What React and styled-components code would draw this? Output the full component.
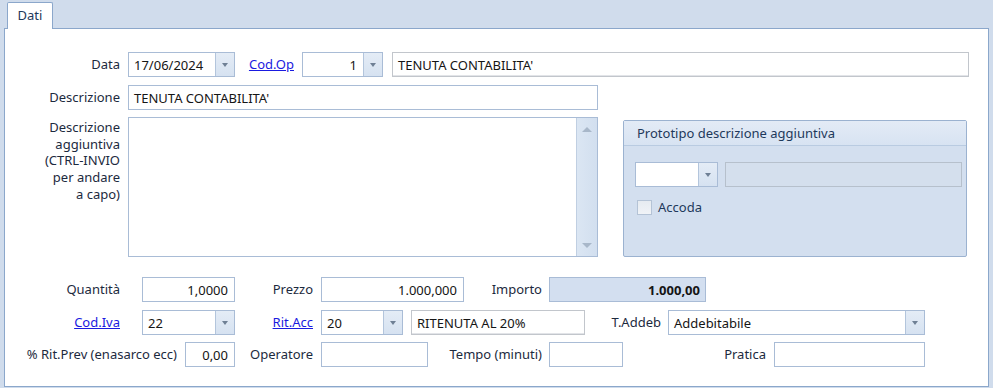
import React from "react";
import styled, { createGlobalStyle, css } from "styled-components";

const GlobalStyle = createGlobalStyle`
  html, body {
    margin: 0;
    padding: 0;
    background: #d3dfee;
  }
  * {
    box-sizing: border-box;
  }
`;

const Frame = styled.div`
  width: 993px;
  height: 388px;
  display: flex;
  flex-direction: column;
  padding: 0 4px 1px 4px;
  background: #d0dcec;
  font-family: "Noto Sans", "Open Sans", sans-serif;
  font-size: 13px;
  color: #1c2a3e;
`;

const TabStrip = styled.div`
  height: 29px;
  display: flex;
  align-items: flex-end;
  padding-left: 3px;
  margin-bottom: -1px;
  position: relative;
  z-index: 1;
`;

const Tab = styled.div`
  width: 46px;
  height: 27px;
  background: #fff;
  border: 1px solid #8ba7cb;
  border-bottom: none;
  border-radius: 2px 2px 0 0;
  display: flex;
  align-items: center;
  justify-content: center;
  color: #1e395b;
  padding-bottom: 2px;
`;

const Panel = styled.div`
  flex: 1;
  background: #fff;
  border: 1px solid #8ba7cb;
  padding-top: 23px;
  display: flex;
  flex-direction: column;
`;

const Row = styled.div`
  display: flex;
  align-items: ${({ $top }) => ($top ? "flex-start" : "center")};
  margin-top: ${({ $mt }) => $mt ?? 8}px;
`;

const Label = styled.div`
  width: ${({ $w }) => $w}px;
  margin-left: ${({ $ml }) => $ml ?? 8}px;
  margin-right: ${({ $mr }) => $mr ?? 8}px;
  text-align: right;
  white-space: nowrap;
  line-height: ${({ $lh }) => $lh ?? 25}px;
  padding-top: ${({ $pt }) => $pt ?? 0}px;
  color: #1c2a3e;
`;

const MultiLabel = styled(Label)`
  line-height: 16.7px;
`;

const LinkText = styled.a`
  color: #1a1ae0;
  text-decoration: underline;
  cursor: pointer;
`;

const boxBase = css`
  height: 25px;
  width: ${({ $w }) => $w}px;
  margin-left: ${({ $ml }) => $ml ?? 0}px;
  border: 1px solid #a9bcd6;
  background: #fff;
  display: flex;
  align-items: stretch;
  color: #151515;
`;

const TextBox = styled.div`
  ${boxBase}
  align-items: center;
  padding: 0 6px 0 5px;
  white-space: nowrap;
  justify-content: ${({ $right }) => ($right ? "flex-end" : "flex-start")};
  ${({ $gray }) =>
    $gray &&
    css`
      border-color: #c2c6cc;
      box-shadow: inset 0 -1px 0 #e2e4e8;
    `}
  ${({ $bold }) =>
    $bold &&
    css`
      background: #d3dff0;
      font-weight: 700;
      padding-right: 5px;
    `}
  ${({ $disabled }) =>
    $disabled &&
    css`
      background: #d4dfed;
      border-color: #b6c0cc;
    `}
`;

const ComboBox = styled.div`
  ${boxBase}
`;

const ComboValue = styled.div`
  flex: 1;
  display: flex;
  align-items: center;
  padding: 0 6px 0 5px;
  white-space: nowrap;
  justify-content: ${({ $right }) => ($right ? "flex-end" : "flex-start")};
`;

const DropButton = styled.div`
  width: 19px;
  background: linear-gradient(#e4ecf6, #d6e2f1);
  border-left: 1px solid #b3c5dc;
  display: flex;
  align-items: center;
  justify-content: center;

  &::after {
    content: "";
    width: 0;
    height: 0;
    border-left: 3.5px solid transparent;
    border-right: 3.5px solid transparent;
    border-top: 4px solid #6f8095;
  }
`;

const Memo = styled.div`
  width: 470px;
  height: 140px;
  border: 1px solid #a9bcd6;
  background: #fff;
  display: flex;
`;

const MemoText = styled.div`
  flex: 1;
`;

const ScrollBar = styled.div`
  width: 21px;
  background: linear-gradient(90deg, #dbe6f3, #d2dfef);
  border-left: 1px solid #c0cfe2;
  display: flex;
  flex-direction: column;
  justify-content: space-between;
  align-items: center;
  padding: 9px 0 8px;
`;

const ScrollArrow = styled.div`
  width: 0;
  height: 0;
  border-left: 5px solid transparent;
  border-right: 5px solid transparent;
  ${({ $up }) =>
    $up
      ? css`border-bottom: 5px solid #a8b7c9;`
      : css`border-top: 5px solid #a8b7c9;`}
`;

const GroupBox = styled.div`
  width: 344px;
  height: 137px;
  margin-left: 25px;
  margin-top: 3px;
  border: 1px solid #9bb2d0;
  border-radius: 2px;
  background: #d3dfef;
  display: flex;
  flex-direction: column;
`;

const GroupHeader = styled.div`
  height: 25px;
  background: linear-gradient(#e3ebf6, #d7e3f2);
  border-bottom: 1px solid #b9cbe1;
  padding-left: 13px;
  display: flex;
  align-items: center;
  color: #1e395b;
`;

const GroupBody = styled.div`
  padding: 16px 0 0 11px;
  display: flex;
  flex-direction: column;
`;

const GroupRow = styled.div`
  display: flex;
  align-items: center;
  margin-top: ${({ $mt }) => $mt ?? 0}px;
`;

const CheckBox = styled.div`
  width: 15px;
  height: 15px;
  margin-left: 2px;
  border: 1px solid #b4c3d6;
  background: linear-gradient(#e6ebf1, #f0f3f7);
`;

const CheckLabel = styled.span`
  margin-left: 6px;
  color: #1e395b;
`;

export default function App() {
  return (
    <>
      <GlobalStyle />
      <Frame>
        <TabStrip>
          <Tab>Dati</Tab>
        </TabStrip>
        <Panel>
          <Row $mt={0}>
            <Label $w={115} $ml={0}>Data</Label>
            <ComboBox $w={107}>
              <ComboValue>17/06/2024</ComboValue>
              <DropButton />
            </ComboBox>
            <Label $w={51}>
              <LinkText>Cod.Op</LinkText>
            </Label>
            <ComboBox $w={81}>
              <ComboValue $right>1</ComboValue>
              <DropButton />
            </ComboBox>
            <TextBox $w={577} $ml={9} $gray>TENUTA CONTABILITA'</TextBox>
          </Row>

          <Row>
            <Label $w={115} $ml={0}>Descrizione</Label>
            <TextBox $w={470}>TENUTA CONTABILITA'</TextBox>
          </Row>

          <Row $top $mt={7}>
            <MultiLabel $w={115} $ml={0} $pt={2}>
              Descrizione
              <br />
              aggiuntiva
              <br />
              (CTRL-INVIO
              <br />
              per andare
              <br />
              a capo)
            </MultiLabel>
            <Memo>
              <MemoText />
              <ScrollBar>
                <ScrollArrow $up />
                <ScrollArrow />
              </ScrollBar>
            </Memo>
            <GroupBox>
              <GroupHeader>Prototipo descrizione aggiuntiva</GroupHeader>
              <GroupBody>
                <GroupRow>
                  <ComboBox $w={83}>
                    <ComboValue />
                    <DropButton />
                  </ComboBox>
                  <TextBox $w={237} $ml={7} $disabled />
                </GroupRow>
                <GroupRow $mt={11}>
                  <CheckBox />
                  <CheckLabel>Accoda</CheckLabel>
                </GroupRow>
              </GroupBody>
            </GroupBox>
          </Row>

          <Row $mt={20}>
            <Label $w={115} $ml={0} $mr={22}>Quantità</Label>
            <TextBox $w={93} $right>1,0000</TextBox>
            <Label $w={70}>Prezzo</Label>
            <TextBox $w={143} $right>1.000,000</TextBox>
            <Label $w={70} $mr={7}>Importo</Label>
            <TextBox $w={157} $right $bold>1.000,00</TextBox>
          </Row>

          <Row>
            <Label $w={115} $ml={0} $mr={22}>
              <LinkText>Cod.Iva</LinkText>
            </Label>
            <ComboBox $w={93}>
              <ComboValue>22</ComboValue>
              <DropButton />
            </ComboBox>
            <Label $w={70}>
              <LinkText>Rit.Acc</LinkText>
            </Label>
            <ComboBox $w={82}>
              <ComboValue>20</ComboValue>
              <DropButton />
            </ComboBox>
            <TextBox $w={174} $ml={8} $gray>RITENUTA AL 20%</TextBox>
            <Label $w={68} $mr={7}>T.Addeb</Label>
            <ComboBox $w={257}>
              <ComboValue>Addebitabile</ComboValue>
              <DropButton />
            </ComboBox>
          </Row>

          <Row $mt={7}>
            <Label $w={172} $ml={0}>% Rit.Prev (enasarco ecc)</Label>
            <TextBox $w={50} $right>0,00</TextBox>
            <Label $w={70}>Operatore</Label>
            <TextBox $w={107} />
            <Label $w={106} $mr={7}>Tempo (minuti)</Label>
            <TextBox $w={74} />
            <Label $w={135}>Pratica</Label>
            <TextBox $w={151} />
          </Row>
        </Panel>
      </Frame>
    </>
  );
}
